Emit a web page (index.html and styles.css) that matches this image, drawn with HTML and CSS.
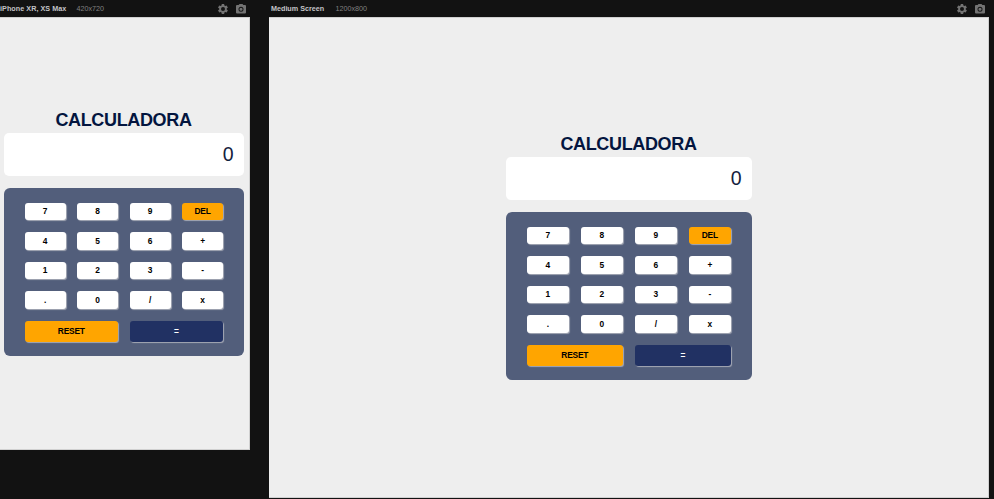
FILE: index.html
```html
<!DOCTYPE html>
<html lang="es">
<head>
<meta charset="utf-8">
<title>Calculadora</title>
<link rel="stylesheet" href="styles.css">
</head>
<body>
<svg width="0" height="0" class="defs">
  <symbol id="gear" viewBox="0 0 24 24"><path d="M19.4 13a7.500 7.500 0 0 0 0-2l2.100-1.600a.5.5 0 0 0 .1-.6l-2-3.500a.5.5 0 0 0-.6-.2l-2.500 1a7.300 7.300 0 0 0-1.700-1l-.4-2.600a.5.5 0 0 0-.5-.5h-4a.5.5 0 0 0-.5.5L9 5.100a7.300 7.300 0 0 0-1.700 1l-2.500-1a.5.5 0 0 0-.6.2l-2 3.500a.5.5 0 0 0 .1.600L4.500 11a7.500 7.500 0 0 0 0 2l-2.200 1.600a.5.5 0 0 0-.1.600l2 3.500c.1.200.4.300.6.200l2.500-1a7.300 7.300 0 0 0 1.700 1l.4 2.600c0 .3.200.5.500.5h4c.3 0 .5-.2.500-.5l.4-2.600a7.300 7.300 0 0 0 1.700-1l2.500 1c.2.100.5 0 .6-.2l2-3.500a.5.5 0 0 0-.1-.6zM12 16a4 4 0 1 1 0-8 4 4 0 0 1 0 8z"/></symbol>
  <symbol id="camera" viewBox="0 0 24 24"><path fill-rule="evenodd" d="M9 2 7.200 4H4a2 2 0 0 0-2 2v13a2 2 0 0 0 2 2h16a2 2 0 0 0 2-2V6a2 2 0 0 0-2-2h-3.200L15 2zM12 17.500a5 5 0 1 1 0-10 5 5 0 0 1 0 10zM12 15.700a3.200 3.200 0 1 0 0-6.400 3.200 3.200 0 0 0 0 6.400z"/></symbol>
</svg>
<main class="previews">
  <section class="device phone">
    <header class="bar">
      <span class="name">iPhone XR, XS Max</span><span class="size">420x720</span>
      <span class="tools"><svg><use href="#gear"/></svg><svg><use href="#camera"/></svg></span>
    </header>
    <div class="screen">
      <div class="calc">
        <h1>CALCULADORA</h1>
        <div class="display">0</div>
        <div class="keys">
          <button>7</button><button>8</button><button>9</button><button class="orange">DEL</button>
          <button>4</button><button>5</button><button>6</button><button>+</button>
          <button>1</button><button>2</button><button>3</button><button>-</button>
          <button>.</button><button>0</button><button>/</button><button>x</button>
          <button class="orange wide">RESET</button><button class="navy wide">=</button>
        </div>
      </div>
    </div>
  </section>
  <section class="device medium">
    <header class="bar">
      <span class="name">Medium Screen</span><span class="size">1200x800</span>
      <span class="tools"><svg><use href="#gear"/></svg><svg><use href="#camera"/></svg></span>
    </header>
    <div class="screen">
      <div class="calc">
        <h1>CALCULADORA</h1>
        <div class="display">0</div>
        <div class="keys">
          <button>7</button><button>8</button><button>9</button><button class="orange">DEL</button>
          <button>4</button><button>5</button><button>6</button><button>+</button>
          <button>1</button><button>2</button><button>3</button><button>-</button>
          <button>.</button><button>0</button><button>/</button><button>x</button>
          <button class="orange wide">RESET</button><button class="navy wide">=</button>
        </div>
      </div>
    </div>
  </section>
</main>
</body>
</html>
```
FILE: styles.css
```css
* { box-sizing: border-box; }
body {
  margin: 0;
  background: #121212;
  font-family: "Liberation Sans", Arial, sans-serif;
  overflow: hidden;
}
.defs { display: none; }
.previews {
  display: flex;
  align-items: flex-start;
  gap: 19px;
  height: 499px;
}
.device { flex: none; }
.phone { width: 250px; }
.medium { width: 720px; }
.bar {
  display: flex;
  align-items: center;
  height: 17px;
  font-size: 7.2px;
  line-height: 17px;
  white-space: nowrap;
  color: #808080;
}
.name { font-weight: bold; color: #c4c4c8; }
.phone .name { width: 76.5px; letter-spacing: 0.05px; }
.medium .name { width: 66.5px; padding-left: 2px; }
.tools { display: flex; gap: 6px; margin-left: auto; padding-right: 3.5px; }
.tools svg { width: 12px; height: 12px; fill: #737373; }
.screen {
  display: flex;
  justify-content: center;
  background: #eee;
  border: 1px solid #d0d0d0;
  border-width: 1px 1px 1px 0;
}
.phone .screen { height: 433px; padding-top: 91px; justify-content: flex-start; padding-left: 3.5px; }
.medium .screen { height: 481px; padding-top: 115px; }
.phone .calc { width: 240px; }
.medium .calc { width: 246px; }
h1 {
  margin: 0 0 1px;
  font-size: 18px;
  line-height: 23px;
  letter-spacing: -0.35px;
  text-align: center;
  color: #03153f;
}
.display {
  height: 43px;
  padding-right: 10px;
  border-radius: 5px;
  background: #fff;
  color: #14213d;
  font-size: 19.5px;
  line-height: 43px;
  text-align: right;
}
.keys {
  display: grid;
  grid-template-columns: repeat(4, 1fr);
  grid-template-rows: repeat(4, 17.5px) 21px;
  gap: 12px 11.5px;
  height: 168px;
  margin-top: 12px;
  padding: 14.5px 20.5px 15px 21px;
  border-radius: 6px;
  background: #525e7b;
}
button {
  min-width: 0;
  padding: 0;
  border: 0;
  border-radius: 3px;
  background: #fff;
  box-shadow: 1px 1px 1px #a5a9b5;
  color: #000;
  font: bold 8.400px "Liberation Sans", Arial, sans-serif;
  letter-spacing: -0.2px;
}
.wide { grid-column: span 2; }
.orange { background: #ffa500; }
.navy { background: #213163; color: #fff; }
```
